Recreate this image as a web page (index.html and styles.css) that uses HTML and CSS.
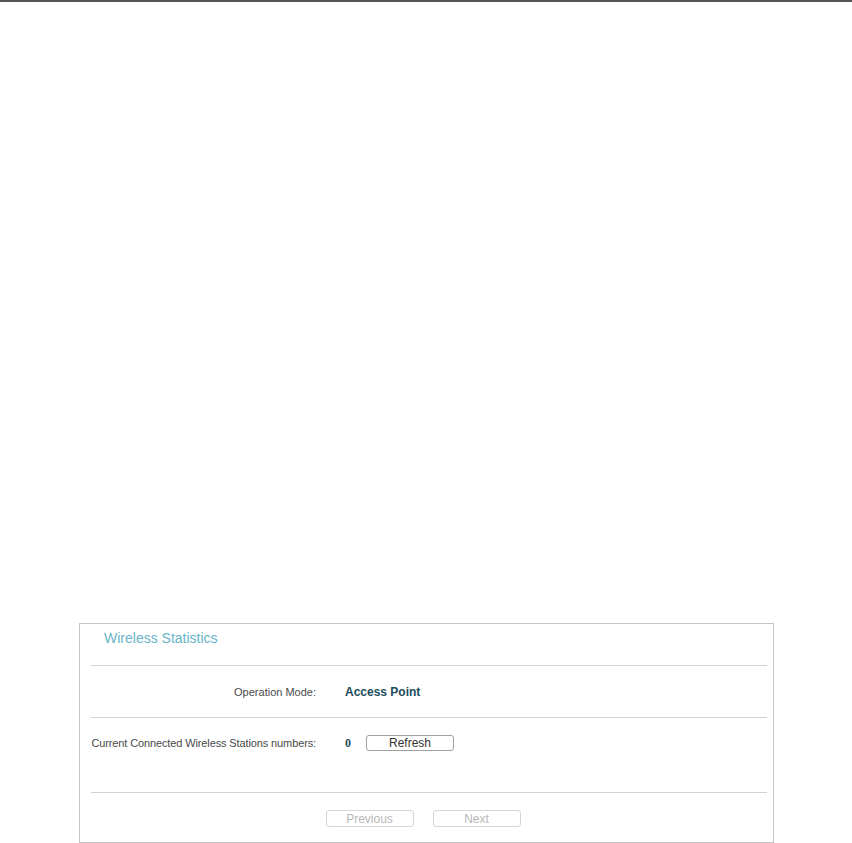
FILE: index.html
```html
<!DOCTYPE html>
<html lang="en">
<head>
    <meta charset="UTF-8">
    <meta name="viewport" content="width=device-width, initial-scale=1.0">
    <title>Wireless Statistics</title>
    <link rel="stylesheet" href="styles.css">
</head>
<body>
    <div class="panel">
        <div class="panel-title">Wireless Statistics</div>
        <div class="row row-mode">
            <div class="label">Operation Mode:</div>
            <div class="value">Access Point</div>
        </div>
        <div class="row row-stations">
            <div class="label label-long">Current Connected Wireless Stations numbers:</div>
            <div class="value">
                <span class="count">0</span>
                <button class="btn">Refresh</button>
            </div>
        </div>
        <div class="row row-nav">
            <button class="btn btn-disabled" disabled>Previous</button>
            <button class="btn btn-disabled" disabled>Next</button>
        </div>
    </div>
</body>
</html>
```

FILE: styles.css
```css
body {
    margin: 0;
    font-family: 'Liberation Sans', Arial, sans-serif;
    background-color: #fff;
    color: #4d4d4d;
    border-top: 2px solid #555;
}

.panel {
    margin: 621px 0 0 79px;
    width: 693px;
    height: 218px;
    border: 1px solid #c4c4c4;
}

.panel-title {
    height: 35px;
    padding: 6px 0 0 24px;
    font-size: 14px;
    line-height: 16px;
    color: #68b4c8;
}

.row {
    margin: 0 6px 0 11px;
    border-top: 1px solid #d2d2d2;
    display: flex;
}

.row-mode {
    height: 51px;
    align-items: center;
}

.row-stations {
    height: 57px;
    padding-top: 17px;
    align-items: flex-start;
}

.label {
    width: 225px;
    flex-shrink: 0;
    text-align: right;
    white-space: nowrap;
    font-size: 11px;
    line-height: 16px;
    color: #4a4a4a;
}

.label-long {
    letter-spacing: -0.12px;
}

.value {
    margin-left: 29px;
    display: flex;
    align-items: center;
    font-size: 12px;
    font-weight: bold;
    color: #1d4c5c;
}

.count {
    font-family: 'Liberation Serif', 'Times New Roman', serif;
    font-size: 12px;
    line-height: 16px;
}

.btn {
    margin-left: 15px;
    width: 88px;
    height: 16px;
    padding: 0;
    border: 1px solid #a0a0a0;
    border-radius: 3px;
    background-color: #fff;
    font-family: 'Liberation Sans', Arial, sans-serif;
    font-size: 12px;
    line-height: 14px;
    color: #333;
}

.row-nav {
    height: 47px;
    padding-top: 17px;
    padding-right: 12px;
    align-items: flex-start;
    justify-content: center;
    gap: 19px;
}

.row-nav .btn {
    margin-left: 0;
    height: 17px;
}

.btn-disabled {
    border-color: #d6d6d6;
    color: #b8b8b8;
}
```
